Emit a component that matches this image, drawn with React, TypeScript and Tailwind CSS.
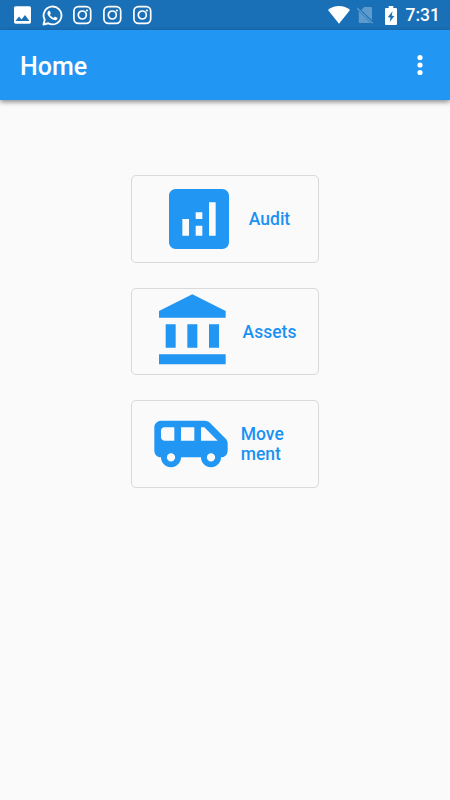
import React from 'react';

interface MenuCardProps {
  label: React.ReactNode;
  icon: React.ReactNode;
}

const MenuCard: React.FC<MenuCardProps> = ({ label, icon }) => (
  <button className="flex h-[87.5px] w-[187.5px] items-center justify-center rounded-[5px] border border-[#d9d9d9] pt-px pr-px text-left text-[17.5px] leading-5 font-medium text-[#1b92f3]">
    <svg viewBox="0 0 24 24" className="-mt-px h-20 w-20 shrink-0 fill-[#2196f3]">{icon}</svg>
    <span className="ml-2.5">{label}</span>
  </button>
);

const InstagramIcon: React.FC = () => (
  <svg viewBox="0 0 20 20" className="h-5 w-5" fill="none" stroke="white" strokeWidth="1.7">
    <rect x="1.9" y="1.6" width="16.8" height="16.8" rx="4.6" />
    <circle cx="10.3" cy="10" r="4" />
    <circle cx="14.9" cy="5.5" r="1.1" fill="white" stroke="none" />
  </svg>
);

const StatusBar: React.FC = () => (
  <div className="flex h-[30px] items-center justify-between bg-[#1a70b7] pr-2.5 pl-3">
    <div className="flex items-center gap-2.5">
      <svg viewBox="1.5 2 20 20" className="h-5 w-5 fill-white">
        <path d="M20.500 19V5c0-1.1-.9-1.700-1.700-1.700H5.200c-1.1 0-1.700.9-1.700 1.700v14c0 1.1.9 1.700 1.700 1.700h13.600c1.1 0 1.700-.9 1.700-1.700zM8.500 13.500l2.500 3.010L14.500 12l4.500 6H5l3.500-4.500z" />
      </svg>
      <svg viewBox="-0.5 0 24 24" className="h-[21px] w-5 overflow-visible fill-white">
        <path d="M17.472 14.382c-.297-.149-1.758-.867-2.03-.967-.273-.099-.471-.148-.67.15-.197.297-.767.966-.94 1.164-.173.199-.347.223-.644.075-.297-.15-1.255-.463-2.39-1.475-.883-.788-1.48-1.761-1.653-2.059-.173-.297-.018-.458.13-.606.134-.133.298-.347.446-.52.149-.174.198-.298.298-.497.099-.198.05-.371-.025-.52-.075-.149-.669-1.612-.916-2.207-.242-.579-.487-.5-.669-.51-.173-.008-.371-.01-.57-.01-.198 0-.52.074-.792.372-.272.297-1.04 1.016-1.04 2.479 0 1.462 1.065 2.875 1.213 3.074.149.198 2.096 3.2 5.077 4.487.709.306 1.262.489 1.694.625.712.227 1.36.195 1.871.118.571-.085 1.758-.719 2.006-1.413.248-.694.248-1.289.173-1.413-.074-.124-.272-.198-.57-.347" />
        <path
          d="M1.300 22.800l1.500-5.700A10.700 10.700 0 1 1 7 21.300z"
          fill="none"
          stroke="white"
          strokeWidth="2.2"
          strokeLinejoin="round"
        />
      </svg>
      <InstagramIcon />
      <InstagramIcon />
      <InstagramIcon />
    </div>
    <div className="flex items-center">
      <svg viewBox="0 0 22 18" className="h-[18px] w-[22px] fill-white">
        <path d="M11 17.700L0 4C3 1.500 6.800 0 11 0s8 1.500 11 4z" />
      </svg>
      <svg viewBox="0 0 18 18" className="ml-[7px] h-[18px] w-[18px]">
        <path d="M15 14.300V2.300C15 1.500 14.500 1 13.700 1H7.200L4.300 3.900zM1.800 5.200V15.800c0 .8.500 1.300 1.300 1.300h10.500z" className="fill-[#5e9bcd]" />
        <path d="M-.3 1.800l15.800 15.400" stroke="#5e9bcd" strokeWidth="1.300" />
      </svg>
      <svg viewBox="0 0 12 18" className="ml-2.5 h-[19px] w-3" preserveAspectRatio="none">
        <path d="M1.200 2H3.700V0h4.600v2h2.500C11.500 2 12 2.500 12 3.200v13.600c0 .7-.5 1.200-1.200 1.200H1.200C.5 18 0 17.500 0 16.800V3.200C0 2.500.5 2 1.200 2z" fill="white" />
        <path d="M7.600 5L2.900 10.500l2.600.7L4.600 15.200L9.200 9.600L6.700 8.900z" className="fill-[#1a70b7]" />
      </svg>
      <span className="ml-[9px] pt-0.5 text-[17.5px] leading-none font-medium text-white">7:31</span>
    </div>
  </div>
);

export default function App() {
  return (
    <div className="min-h-screen bg-[#fafafa] font-[Roboto,sans-serif]">
      <StatusBar />

      <header className="flex h-[70px] items-center justify-between bg-[#2196f3] pr-[15px] pl-5 shadow-[0_2px_5px_rgba(0,0,0,0.45)]">
        <h1 className="pt-0.5 text-[25px] leading-none font-medium text-white">Home</h1>
        <button aria-label="Menu">
          <svg viewBox="0 0 30 30" className="h-[30px] w-[30px] fill-white">
            <circle cx="15" cy="7.500" r="2.600" />
            <circle cx="15" cy="15" r="2.600" />
            <circle cx="15" cy="22.500" r="2.600" />
          </svg>
        </button>
      </header>

      <main className="flex flex-col items-center gap-[25px] pt-[75px]">
        <MenuCard
          label="Audit"
          icon={<path fillRule="evenodd" d="M5 3h14c1.100 0 2 .9 2 2v14c0 1.100-.9 2-2 2H5c-1.100 0-2-.9-2-2V5c0-1.100.9-2 2-2zM7 12v5h2v-5zM11 10v2h2v-2zM11 14v3h2v-3zM15 7v10h2V7z" />}
        />
        <MenuCard
          label="Assets"
          icon={<path d="M3.800 10v7h3v-7h-3zm6.500 0v7h3v-7h-3zM1.800 22h20v-3h-20v3zm15-12v7h3v-7h-3zM11.800 1L1.800 6v2h20V6L11.800 1z" />}
        />
        <MenuCard
          label={<span className="block w-[57.5px]">Move<br />ment</span>}
          icon={
            <path
              fillRule="evenodd"
              d="M22.410 10.410l-4.830-4.830C17.210 5.210 16.700 5 16.170 5H3c-1.100 0-2 .9-2 2v7c0 1.100.9 2 2 2 0 1.650 1.340 3 3 3s3-1.350 3-3h6c0 1.650 1.340 3 3 3s3-1.350 3-3c1.100 0 2-.9 2-2v-2.170c0-.53-.21-1.040-.59-1.420zM3 10V8c0-.55.450-1 1-1h3v4H4c-.55 0-1-.45-1-1zM6 17.250a1.250 1.250 0 1 1 0-2.500 1.250 1.250 0 0 1 0 2.500zM13 11H9V7h4v4zM18 17.250a1.250 1.250 0 1 1 0-2.500 1.250 1.250 0 0 1 0 2.500zM15 11V7h1l4 4h-5z"
            />
          }
        />
      </main>
    </div>
  );
}
